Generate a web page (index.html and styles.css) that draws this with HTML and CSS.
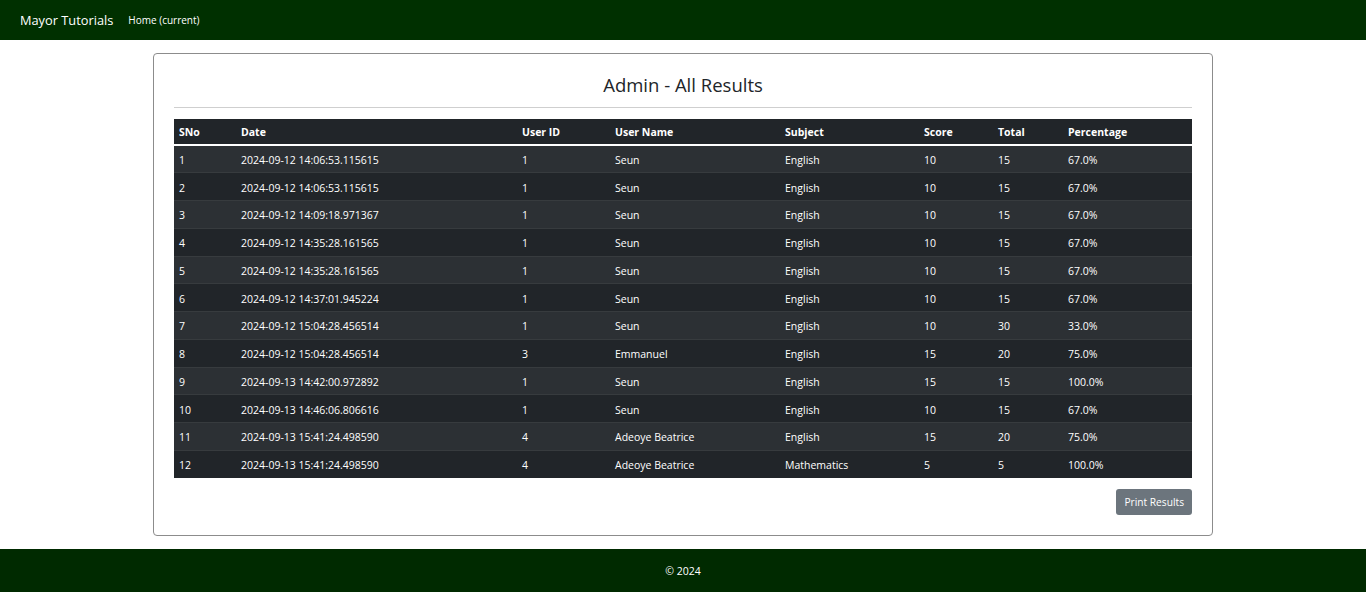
FILE: index.html
```html
<!DOCTYPE html>
<html lang="en">
<head>
<meta charset="utf-8">
<title>Admin - All Results</title>
<link rel="stylesheet" href="styles.css">
</head>
<body>
<nav class="navbar">
  <a class="brand" href="#">Mayor Tutorials</a>
  <a class="nav-link" href="#">Home (current)</a>
</nav>
<main class="page">
  <section class="card">
    <h1 class="title">Admin - All Results</h1>
    <hr class="divider">
    <table class="results">
      <colgroup>
        <col class="c-sno"><col class="c-date"><col class="c-uid"><col class="c-name"><col class="c-subj"><col class="c-score"><col class="c-total"><col class="c-pct">
      </colgroup>
      <thead>
        <tr><th>SNo</th><th>Date</th><th>User ID</th><th>User Name</th><th>Subject</th><th>Score</th><th>Total</th><th>Percentage</th></tr>
      </thead>
      <tbody>
        <tr><td>1</td><td>2024-09-12 14:06:53.115615</td><td>1</td><td>Seun</td><td>English</td><td>10</td><td>15</td><td>67.0%</td></tr>
        <tr><td>2</td><td>2024-09-12 14:06:53.115615</td><td>1</td><td>Seun</td><td>English</td><td>10</td><td>15</td><td>67.0%</td></tr>
        <tr><td>3</td><td>2024-09-12 14:09:18.971367</td><td>1</td><td>Seun</td><td>English</td><td>10</td><td>15</td><td>67.0%</td></tr>
        <tr><td>4</td><td>2024-09-12 14:35:28.161565</td><td>1</td><td>Seun</td><td>English</td><td>10</td><td>15</td><td>67.0%</td></tr>
        <tr><td>5</td><td>2024-09-12 14:35:28.161565</td><td>1</td><td>Seun</td><td>English</td><td>10</td><td>15</td><td>67.0%</td></tr>
        <tr><td>6</td><td>2024-09-12 14:37:01.945224</td><td>1</td><td>Seun</td><td>English</td><td>10</td><td>15</td><td>67.0%</td></tr>
        <tr><td>7</td><td>2024-09-12 15:04:28.456514</td><td>1</td><td>Seun</td><td>English</td><td>10</td><td>30</td><td>33.0%</td></tr>
        <tr><td>8</td><td>2024-09-12 15:04:28.456514</td><td>3</td><td>Emmanuel</td><td>English</td><td>15</td><td>20</td><td>75.0%</td></tr>
        <tr><td>9</td><td>2024-09-13 14:42:00.972892</td><td>1</td><td>Seun</td><td>English</td><td>15</td><td>15</td><td>100.0%</td></tr>
        <tr><td>10</td><td>2024-09-13 14:46:06.806616</td><td>1</td><td>Seun</td><td>English</td><td>10</td><td>15</td><td>67.0%</td></tr>
        <tr><td>11</td><td>2024-09-13 15:41:24.498590</td><td>4</td><td>Adeoye Beatrice</td><td>English</td><td>15</td><td>20</td><td>75.0%</td></tr>
        <tr><td>12</td><td>2024-09-13 15:41:24.498590</td><td>4</td><td>Adeoye Beatrice</td><td>Mathematics</td><td>5</td><td>5</td><td>100.0%</td></tr>
      </tbody>
    </table>
    <div class="actions">
      <button class="btn" type="button">Print Results</button>
    </div>
  </section>
</main>
<footer class="footer">© 2024</footer>
</body>
</html>
```
FILE: styles.css
```css
* { box-sizing: border-box; }
html, body { margin: 0; padding: 0; }
body {
  font-family: "Open Sans", "Noto Sans", "Liberation Sans", sans-serif;
  font-size: 10.5px;
  color: #212529;
  background: #fff;
}
.navbar {
  height: 40px;
  background: #003000;
  display: flex;
  align-items: center;
  padding: 0 20px;
  gap: 15px;
}
.brand {
  color: #fff;
  text-decoration: none;
  font-size: 12.8px;
}
.nav-link {
  color: #fff;
  text-decoration: none;
  font-size: 10px;
}
.page {
  display: flex;
  justify-content: center;
  padding: 13px 0 13px;
}
.card {
  width: 1060px;
  height: 483px;
  border: 1px solid #8c8c8c;
  border-radius: 4px;
  padding: 19px 20px 20px;
  display: flex;
  flex-direction: column;
}
.title {
  margin: 0;
  text-align: center;
  font-weight: 400;
  font-size: 18.5px;
  line-height: 24px;
  color: #212529;
}
.divider {
  margin: 10px 0 11px;
  border: 0;
  border-top: 1px solid #cfcfcf;
}
.results {
  width: 1018px;
  border-collapse: collapse;
  table-layout: fixed;
  background: #212529;
  color: #fff;
}
.c-sno { width: 62px; }
.c-date { width: 281px; }
.c-uid { width: 93px; }
.c-name { width: 170px; }
.c-subj { width: 139px; }
.c-score { width: 74px; }
.c-total { width: 70px; }
.c-pct { width: 129px; }
.results th {
  text-align: left;
  font-weight: 700;
  padding: 0 5px;
  height: 26px;
  border-bottom: 2px solid #fff;
}
.results td {
  padding: 2px 5px 0;
  height: 27.75px;
  border-top: 1px solid #373b3e;
}
.results tbody tr:first-child td { border-top: 0; }
.results tbody tr:nth-child(odd) { background: #2c3034; }
.actions {
  display: flex;
  justify-content: flex-end;
  margin-top: 11px;
}
.btn {
  font-family: inherit;
  font-size: 10.2px;
  color: #fff;
  background: #6c757d;
  border: 0;
  border-radius: 3px;
  height: 26px;
  padding: 0 8px;
}
.footer {
  height: 43px;
  background: #002a00;
  color: #fff;
  display: flex;
  align-items: center;
  justify-content: center;
  font-size: 10.5px;
}
```
